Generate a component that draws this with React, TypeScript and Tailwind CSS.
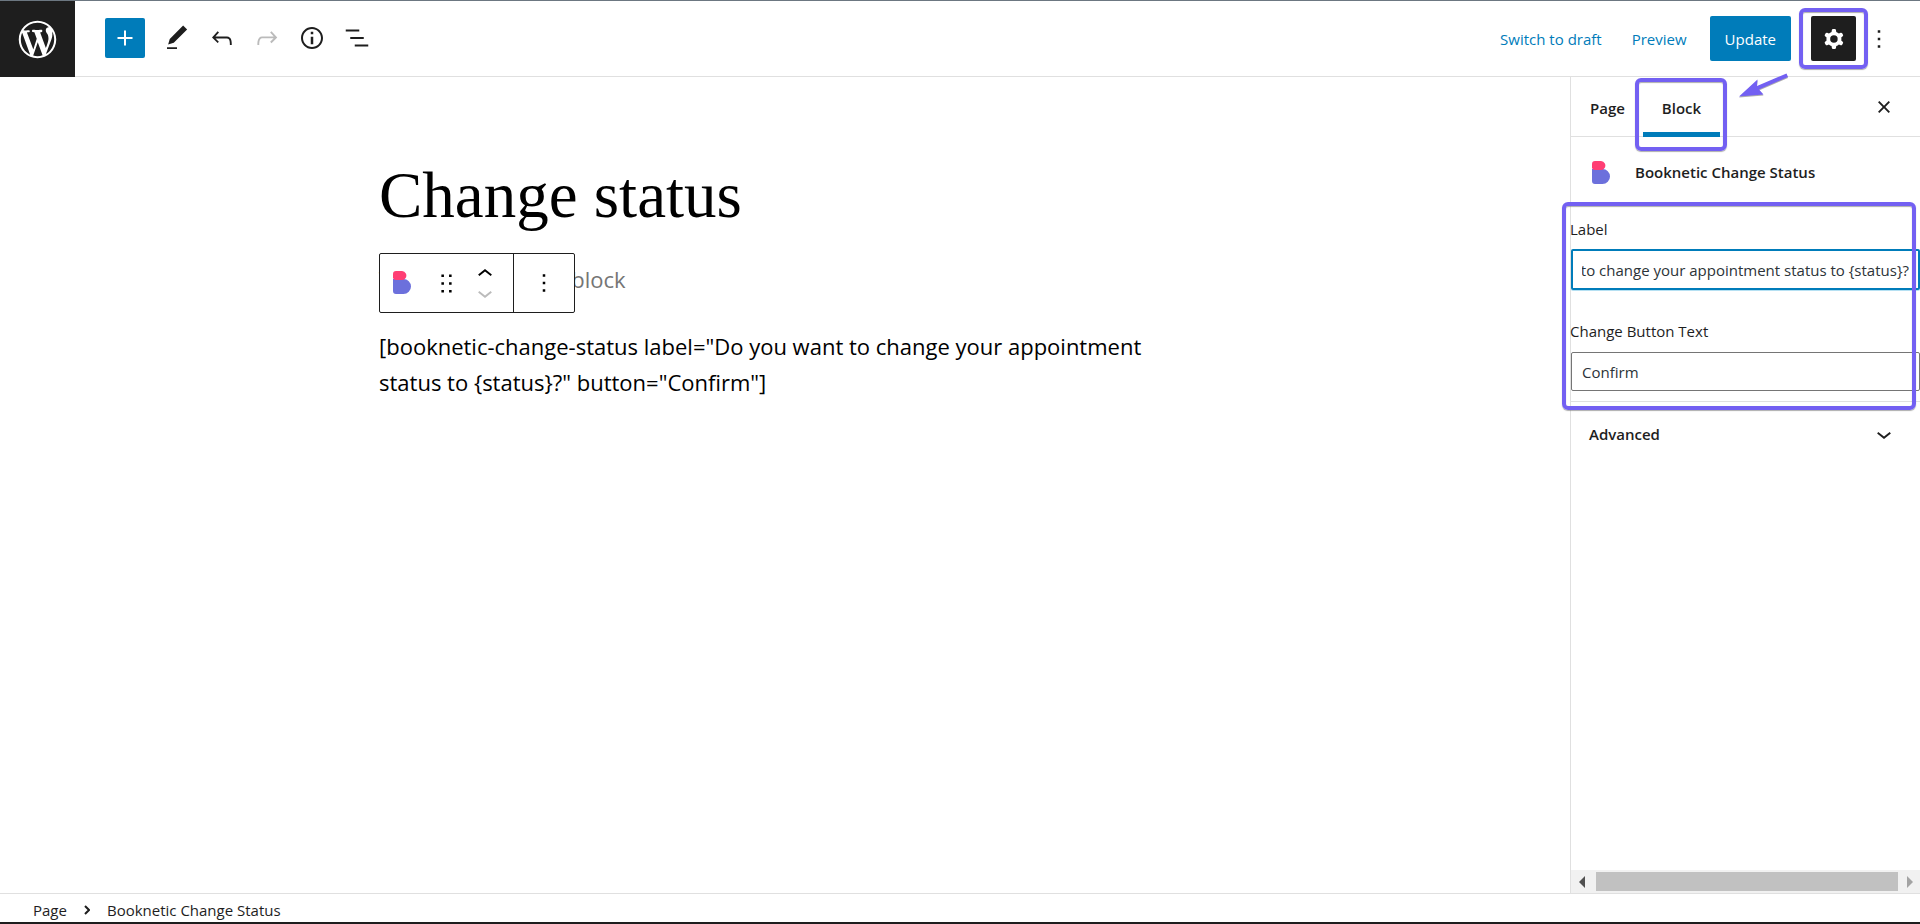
import { useEffect, useRef, type ReactNode } from "react";

type IconProps = {
  d: string;
  className?: string;
  viewBox?: string;
};

function Icon({ d, className = "size-[30px]", viewBox = "0 0 24 24" }: IconProps) {
  return (
    <svg viewBox={viewBox} className={className} fill="currentColor" fillRule="evenodd" aria-hidden="true">
      <path d={d} />
    </svg>
  );
}

const icons = {
  wordpress:
    "M20 10c0-5.51-4.49-10-10-10C4.48 0 0 4.49 0 10c0 5.52 4.48 10 10 10 5.51 0 10-4.48 10-10zM7.78 15.37L4.37 6.22c.55-.02 1.17-.08 1.17-.08.5-.06.44-1.13-.06-1.11 0 0-1.45.11-2.37.11-.18 0-.37 0-.58-.01C4.12 2.69 6.87 1.11 10 1.11c2.33 0 4.45.87 6.05 2.34-.68-.11-1.65.39-1.65 1.58 0 .74.45 1.36.9 2.1.35.61.55 1.36.55 2.46 0 1.49-1.4 5-1.4 5l-3.03-8.37c.54-.02.82-.17.82-.17.5-.05.44-1.25-.06-1.22 0 0-1.44.12-2.38.12-.87 0-2.33-.12-2.33-.12-.5-.03-.56 1.2-.06 1.22l.92.08 1.26 3.41zM17.41 10c.24-.64.74-1.87.43-4.25.7 1.29 1.05 2.71 1.05 4.25 0 3.29-1.73 6.24-4.4 7.78.97-2.59 1.94-5.2 2.92-7.78zM6.1 18.09C3.12 16.65 1.11 13.53 1.11 10c0-1.3.23-2.48.72-3.59C3.25 10.3 4.67 14.2 6.1 18.09zm4.03-6.63l2.58 6.98c-.86.29-1.76.45-2.71.45-.79 0-1.57-.11-2.29-.33.81-2.38 1.62-4.74 2.42-7.1z",
  plus: "M18 11.2h-5.2V6h-1.6v5.2H6v1.6h5.2V18h1.6v-5.2H18z",
  edit: "M20.1 5.1L16.9 2 6.2 12.7l-1.3 4.4 4.5-1.3L20.1 5.1zM4 20.8h8v-1.5H4v1.5z",
  undo: "M18.3 11.7c-.6-.6-1.4-.9-2.3-.9H6.7l2.9-3.3-1.1-1-4.5 5L8.5 16l1-1-2.7-2.7H16c.5 0 .9.2 1.3.5 1 1 1 3.4 1 4.5v.3h1.5v-.2c0-1.5 0-4.3-1.5-5.7z",
  redo: "M15.6 6.5l-1.1 1 2.9 3.3H8c-.9 0-1.7.3-2.3.9-1.4 1.5-1.4 4.2-1.4 5.6v.2h1.5v-.3c0-1.1 0-3.5 1-4.5.3-.3.7-.5 1.3-.5h9.2L14.5 15l1.1 1.1 4.6-4.6-4.6-5z",
  info: "M12 3.2c-4.8 0-8.8 3.9-8.8 8.8 0 4.8 3.9 8.8 8.8 8.8 4.8 0 8.8-3.9 8.8-8.8 0-4.8-4-8.8-8.8-8.8zm0 16c-4 0-7.2-3.3-7.2-7.2C4.8 8 8 4.8 12 4.8s7.2 3.3 7.2 7.2c0 4-3.2 7.2-7.2 7.2zM11 17h2v-6h-2v6zm0-8h2V7h-2v2z",
  listView: "M13.8 5.2H3v1.5h10.8V5.2zm-3.6 12v1.5H21v-1.5H10.2zm7.2-6H6.6v1.5h10.8v-1.5z",
  more: "M13 19h-2v-2h2v2zm0-6h-2v-2h2v2zm0-6h-2V5h2v2z",
  drag: "M5 4h2V2H5v2zm6-2v2h2V2h-2zm-6 8h2V8H5v2zm6 0h2V8h-2v2zm-6 6h2v-2H5v2zm6 0h2v-2h-2v2z",
  up: "M6.5 12.4L12 8l5.5 4.4-.9 1.2L12 10l-4.5 3.6-1-1.2z",
  down: "M17.5 11.6L12 16l-5.5-4.4.9-1.2L12 14l4.5-3.6 1 1.2z",
  close:
    "M12 13.06l3.712 3.713 1.061-1.06L13.061 12l3.712-3.712-1.06-1.06L12 10.938 8.288 7.227l-1.061 1.06L10.939 12l-3.712 3.712 1.06 1.061L12 13.061z",
  cog: "M10.289 4.836A1 1 0 0111.275 4h1.306a1 1 0 01.987.836l.244 1.466c.787.26 1.503.679 2.108 1.218l1.393-.522a1 1 0 011.216.437l.653 1.13a1 1 0 01-.23 1.273l-1.148.944a6.025 6.025 0 010 2.435l1.149.946a1 1 0 01.23 1.272l-.653 1.13a1 1 0 01-1.216.437l-1.394-.522c-.605.54-1.32.958-2.108 1.218l-.244 1.466a1 1 0 01-.987.836h-1.306a1 1 0 01-.986-.836l-.244-1.466a5.995 5.995 0 01-2.108-1.218l-1.394.522a1 1 0 01-1.217-.436l-.653-1.131a1 1 0 01.23-1.272l1.149-.946a6.026 6.026 0 010-2.435l-1.148-.944a1 1 0 01-.23-1.272l.653-1.131a1 1 0 011.217-.437l1.393.522a5.994 5.994 0 012.108-1.218l.244-1.466zM14.929 12a3 3 0 11-6 0 3 3 0 016 0z",
};

const shortcode =
  '[booknetic-change-status label="Do you want to change your appointment status to {status}?" button="Confirm"]';

function BookneticIcon() {
  return (
    <svg viewBox="0 0 18 23" className="h-[23px] w-[18px]" aria-hidden="true">
      <path d="M0 8h10.500a7.300 7.300 0 0 1 0 15H3a3 3 0 0 1-3-3z" fill="#6c70dc" />
      <path d="M3 0h5.500a4.600 4.600 0 0 1 3.700 7.600Q11.600 9 9.500 9H3a3 3 0 0 1-3-2V3a3 3 0 0 1 3-3z" fill="#ff3e74" />
    </svg>
  );
}

// purple frame laid over whatever it points out
function Highlight({ className }: { className: string }) {
  return (
    <div
      className={`pointer-events-none absolute z-20 rounded-md border-4 border-[#7360f2] shadow-[0_1px_1px_#77777799,inset_0_1px_1px_#77777799] ${className}`}
    />
  );
}

function ToolButton({ label, disabled, children }: { label: string; disabled?: boolean; children: ReactNode }) {
  return (
    <button type="button" aria-label={label} disabled={disabled} className="disabled:text-[#bbbbbb]">
      {children}
    </button>
  );
}

function Header() {
  return (
    <header className="flex h-[76px] shrink-0 items-center border-b border-[#e0e0e0]">
      <a
        href="#pages"
        aria-label="View pages"
        className="-mb-px flex h-[76px] w-[75px] items-center justify-center bg-[#1e1e1e] text-white"
      >
        <Icon d={icons.wordpress} viewBox="-2 -2 24 24" className="size-[45px]" />
      </a>
      <div className="mb-px ml-[30px] flex items-center gap-[15px]">
        <button
          type="button"
          aria-label="Add block"
          className="mr-0.5 flex size-10 items-center justify-center rounded-xs bg-[#007cba] text-white"
        >
          <Icon d={icons.plus} />
        </button>
        <ToolButton label="Tools">
          <Icon d={icons.edit} />
        </ToolButton>
        <ToolButton label="Undo">
          <Icon d={icons.undo} />
        </ToolButton>
        <ToolButton label="Redo" disabled>
          <Icon d={icons.redo} />
        </ToolButton>
        <ToolButton label="Details">
          <Icon d={icons.info} />
        </ToolButton>
        <ToolButton label="List view">
          <Icon d={icons.listView} />
        </ToolButton>
      </div>
      <div className="ml-auto flex items-center pr-[26px] text-[#007cba]">
        <button type="button" className="mr-[30px]">
          Switch to draft
        </button>
        <button type="button" className="mr-[23px]">
          Preview
        </button>
        <button type="button" className="mr-5 h-[45px] rounded-xs bg-[#007cba] px-[15px] text-white">
          Update
        </button>
        <div className="relative mr-2">
          <button
            type="button"
            aria-label="Settings"
            className="flex size-[45px] items-center justify-center rounded-xs bg-[#1e1e1e] text-white"
          >
            <Icon d={icons.cog} />
          </button>
          <Highlight className="-top-2 -right-3 -bottom-2 -left-3" />
          <svg
            viewBox="0 0 50 26"
            className="absolute top-[57px] -left-[72px] z-20 h-[26px] w-[50px] drop-shadow-[0_1px_0_#77777799]"
            fill="#7360f2"
            aria-hidden="true"
          >
            <path d="M0 23.500L18.500 6.500L18 13L47.500 0.500L49 4L20 16.500L24.500 21.500Z" />
          </svg>
        </div>
        <button type="button" aria-label="Options" className="text-[#1e1e1e]">
          <Icon d={icons.more} />
        </button>
      </div>
    </header>
  );
}

function BlockToolbar() {
  return (
    <div className="absolute top-0 left-0 z-10 flex h-[60px] rounded-xs border border-[#1e1e1e] bg-white">
      <div className="flex items-center border-r border-[#1e1e1e] px-[13px]">
        <button type="button" aria-label="Booknetic Change Status" className="mb-0.5">
          <BookneticIcon />
        </button>
        <button type="button" aria-label="Drag" className="ml-6">
          <Icon d={icons.drag} viewBox="0 0 18 18" className="size-[23px]" />
        </button>
        <div className="ml-3 flex flex-col">
          <button type="button" aria-label="Move up" className="flex h-[19px] items-center">
            <Icon d={icons.up} />
          </button>
          <button type="button" aria-label="Move down" disabled className="flex h-[19px] items-center text-[#bbbbbb]">
            <Icon d={icons.down} />
          </button>
        </div>
      </div>
      <button type="button" aria-label="Block options" className="flex w-[60px] items-center justify-center">
        <Icon d={icons.more} />
      </button>
    </div>
  );
}

function Editor() {
  return (
    <main className="min-w-0 flex-1 px-6">
      <div className="mx-auto max-w-[812px] text-[22px] leading-9 text-black">
        <h1 className="pt-[80px] font-['Liberation_Serif',serif] text-[65px] leading-[76px]">Change status</h1>
        <div className="relative mt-5 h-[60px]">
          <p className="pt-2 text-[#757575]">Type / to choose a block</p>
          <BlockToolbar />
        </div>
        <p className="mt-[15px]">{shortcode}</p>
      </div>
    </main>
  );
}

function Sidebar() {
  const labelInput = useRef<HTMLInputElement>(null);

  // keep the end of the long label in view
  useEffect(() => {
    if (labelInput.current) labelInput.current.scrollLeft = labelInput.current.scrollWidth;
  }, []);

  return (
    <aside className="flex w-[350px] shrink-0 flex-col border-l border-[#e0e0e0]">
      <div className="flex h-[60px] border-b border-[#e0e0e0] font-semibold">
        <button type="button" className="w-[72px] pt-0.5 pl-px">
          Page
        </button>
        <div className="relative -mb-px">
          <button type="button" className="h-full w-[77px] border-b-5 border-[#007cba] pt-[6px]">
            Block
          </button>
          <Highlight className="top-px -right-[7px] -bottom-[14px] -left-2" />
        </div>
        <button type="button" aria-label="Close settings" className="mr-[21px] ml-auto">
          <Icon d={icons.close} />
        </button>
      </div>

      <div className="flex h-[70px] items-center gap-[25px] pl-[21px]">
        <BookneticIcon />
        <h2 className="font-semibold">Booknetic Change Status</h2>
      </div>

      <div className="relative border-b border-[#e0e0e0] pt-[11px] pb-[10px] text-[#1e1e1e]">
        <label htmlFor="label" className="-ml-px block">
          Label
        </label>
        <input
          id="label"
          ref={labelInput}
          type="text"
          defaultValue="Do you want to change your appointment status to {status}?"
          className="mt-[9px] block h-[41px] w-full rounded-xs border-2 border-[#007cba] px-[9px] text-[#2c3338] shadow-[0_1px_0_#b5e0f2] outline-none"
        />
        <label htmlFor="button-text" className="mt-[30px] -ml-px block">
          Change Button Text
        </label>
        <input
          id="button-text"
          type="text"
          defaultValue="Confirm"
          className="mt-[10px] block h-[39px] w-full rounded-xs border border-[#757575] px-[10px] pt-px text-[#2c3338] outline-none"
        />
        <Highlight className="-top-[5px] right-1 -bottom-[9px] -left-[9px]" />
      </div>

      <button type="button" className="flex h-16 items-center justify-between pr-[21px] pl-[18px] font-semibold">
        Advanced
        <Icon d={icons.down} />
      </button>

      {/* horizontal scrollbar */}
      <div className="mt-auto flex h-[23px] items-center bg-[#f1f1f1]">
        <Icon d="M6 0v12L0 6z" viewBox="0 0 6 12" className="ml-2 h-3 w-1.5 text-[#505050]" />
        <div className="mr-[9px] ml-[11px] h-[19px] flex-1 bg-[#c1c1c1]" />
        <Icon d="M0 0v12l6-6z" viewBox="0 0 6 12" className="mr-[7px] h-3 w-1.5 text-[#a3a3a3]" />
      </div>
    </aside>
  );
}

export default function App() {
  return (
    <div className="flex min-h-screen flex-col border-t border-[#6c7781] bg-white font-['Open_Sans','Noto_Sans',sans-serif] text-[15px] leading-[22px] text-[#1e1e1e]">
      <Header />
      <div className="flex flex-1">
        <Editor />
        <Sidebar />
      </div>
      <footer className="flex h-[31px] items-center border-t border-b-2 border-t-[#e0e0e0] border-b-[#1e1e1e] pt-1 pl-[33px]">
        <button type="button">Page</button>
        <svg viewBox="0 0 6 10" className="mx-[17px] h-[10px] w-1.5" fill="none" stroke="currentColor" strokeWidth="2">
          <path d="M1 1l4 4-4 4" />
        </svg>
        <span>Booknetic Change Status</span>
      </footer>
    </div>
  );
}
